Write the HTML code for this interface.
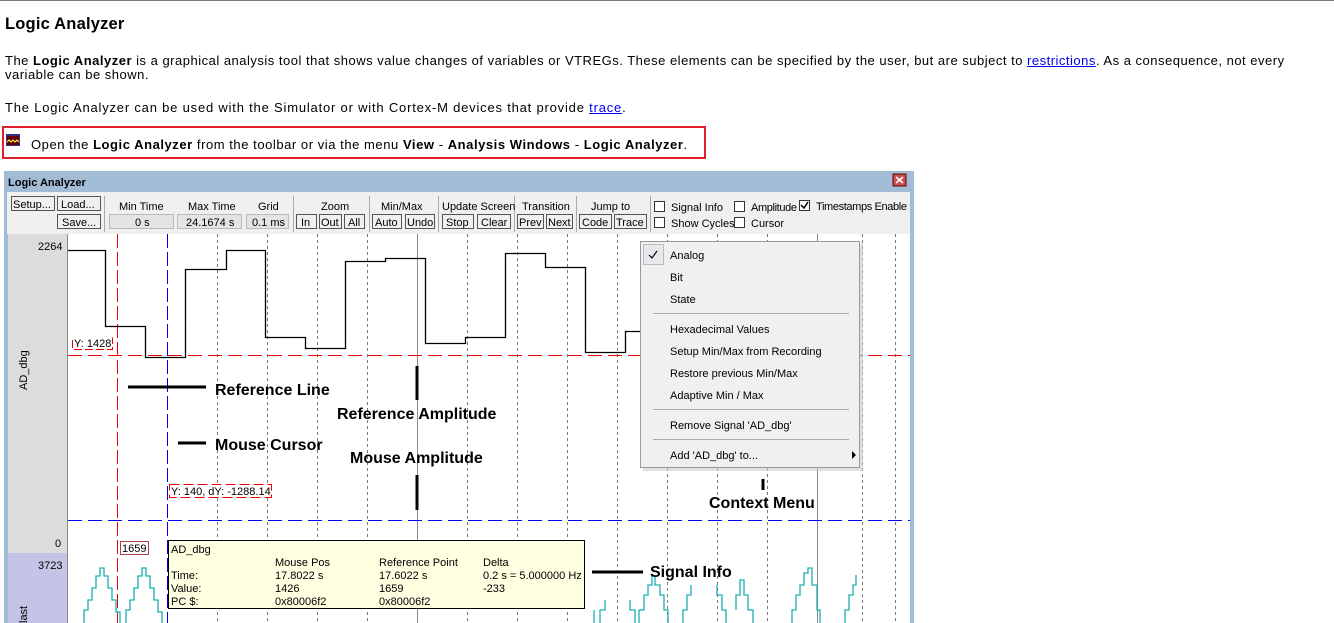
<!DOCTYPE html>
<html><head><meta charset="utf-8"><style>
*{margin:0;padding:0;box-sizing:border-box}
body{width:1334px;height:623px;overflow:hidden;background:#fff;font-family:"Liberation Sans",sans-serif;color:#000;position:relative}
.a{position:absolute;white-space:nowrap}
p.a{font-size:13px}
a{color:#00e;text-decoration:underline}
</style></head><body>
<div class="a" style="left:0;top:0;width:1334px;height:1px;background:#777"></div>
<div class="a" style="left:5px;top:15px;font-size:16.5px;font-weight:bold;letter-spacing:0.2px">Logic Analyzer</div>
<p class="a" style="left:5px;top:53px;letter-spacing:0.5px">The <b>Logic Analyzer</b> is a graphical analysis tool that shows value changes of variables or VTREGs. These elements can be specified by the user, but are subject to <a>restrictions</a>. As a consequence, not every</p>
<p class="a" style="left:5px;top:67px;letter-spacing:0.5px">variable can be shown.</p>
<p class="a" style="left:5px;top:100px;letter-spacing:0.8px">The Logic Analyzer can be used with the Simulator or with Cortex-M devices that provide <a>trace</a>.</p>
<div class="a" style="left:2px;top:126px;width:704px;height:33px;border:2px solid #e0202a"></div>
<svg class="a" style="left:6px;top:134px" width="14" height="12"><rect x="0" y="0" width="14" height="12" fill="#33338a"/><rect x="1" y="2" width="12" height="9" fill="#600"/><path d="M1 8 L3 6 L5 8 L7 6 L9 8 L11 6 L13 8" stroke="#ff3" fill="none"/></svg>
<p class="a" style="left:31px;top:137px;letter-spacing:0.55px">Open the <b>Logic Analyzer</b> from the toolbar or via the menu <b>View</b> - <b>Analysis Windows</b> - <b>Logic Analyzer</b>.</p>

<svg class="a" style="left:0;top:170px" width="916" height="453" font-family="Liberation Sans,sans-serif" font-size="11">
<rect x="4" y="1" width="910" height="452" fill="#a3bcd6"/>
<text x="8" y="16" font-weight="bold" font-size="11">Logic Analyzer</text>
<rect x="893" y="4" width="13" height="12" fill="#c85050" stroke="#600"/>
<path d="M896 7 L903 13 M903 7 L896 13" stroke="#fff" stroke-width="1.5"/>
<rect x="7" y="22" width="903" height="42" fill="#f0f0f0"/>
<rect x="8" y="64" width="902" height="389" fill="#fff"/>
<rect x="8" y="64" width="59" height="319" fill="#dcdcdc"/>
<rect x="8" y="383" width="59" height="70" fill="#c4c4e6"/>
<line x1="67.5" y1="64" x2="67.5" y2="453" stroke="#888"/>
<g fill="#f0f0f0" stroke="#555">
<rect x="11.5" y="26.5" width="43" height="14"/><rect x="57.5" y="26.5" width="43" height="14"/><rect x="57.5" y="44.5" width="43" height="14"/>
<rect x="296.5" y="44.5" width="20" height="14"/><rect x="319.5" y="44.5" width="22" height="14"/><rect x="344.5" y="44.5" width="20" height="14"/>
<rect x="372.5" y="44.5" width="29" height="14"/><rect x="405.5" y="44.5" width="29" height="14"/>
<rect x="442.5" y="44.5" width="31" height="14"/><rect x="477.5" y="44.5" width="33" height="14"/>
<rect x="517.5" y="44.5" width="26" height="14"/><rect x="546.5" y="44.5" width="26" height="14"/>
<rect x="579.5" y="44.5" width="32" height="14"/><rect x="614.5" y="44.5" width="32" height="14"/>
</g>
<g fill="#e4e4e4" stroke="#bbb"><rect x="109.5" y="44.5" width="64" height="14"/><rect x="177.5" y="44.5" width="64" height="14"/><rect x="246.5" y="44.5" width="42" height="14"/></g>
<g stroke="#aaa"><line x1="104.5" y1="26" x2="104.5" y2="62"/><line x1="293.5" y1="26" x2="293.5" y2="62"/><line x1="369.5" y1="26" x2="369.5" y2="62"/><line x1="438.5" y1="26" x2="438.5" y2="62"/><line x1="514.5" y1="26" x2="514.5" y2="62"/><line x1="576.5" y1="26" x2="576.5" y2="62"/><line x1="650.5" y1="26" x2="650.5" y2="62"/></g>
<g font-size="11">
<text x="13" y="38">Setup...</text><text x="61" y="38">Load...</text><text x="62" y="56">Save...</text>
<text x="119" y="40">Min Time</text><text x="188" y="40">Max Time</text><text x="258" y="40">Grid</text>
<text x="135" y="56">0 s</text><text x="186" y="56">24.1674 s</text><text x="252" y="56">0.1 ms</text>
<text x="321" y="40">Zoom</text><text x="301" y="56">In</text><text x="321" y="56">Out</text><text x="348" y="56">All</text>
<text x="381" y="40">Min/Max</text><text x="375" y="56">Auto</text><text x="407" y="56">Undo</text>
<text x="442" y="40">Update Screen</text><text x="446" y="56">Stop</text><text x="481" y="56">Clear</text>
<text x="522" y="40">Transition</text><text x="519" y="56">Prev</text><text x="548" y="56">Next</text>
<text x="591" y="40">Jump to</text><text x="582" y="56">Code</text><text x="616" y="56">Trace</text>
<text x="671" y="41">Signal Info</text><text x="751" y="41" textLength="46">Amplitude</text><text x="816" y="40" textLength="91">Timestamps Enable</text>
<text x="671" y="57">Show Cycles</text><text x="751" y="57">Cursor</text>
</g>
<g fill="#fff" stroke="#333"><rect x="654.5" y="31.5" width="10" height="10"/><rect x="734.5" y="31.5" width="10" height="10"/><rect x="799.5" y="30.5" width="10" height="10"/><rect x="654.5" y="47.5" width="10" height="10"/><rect x="734.5" y="47.5" width="10" height="10"/></g>
<path d="M801 35 L804 38 L808 32" stroke="#000" stroke-width="1.5" fill="none"/>
<text x="38" y="80">2264</text><text x="55" y="377">0</text><text x="38" y="399">3723</text>
<text transform="translate(27,220) rotate(-90)">AD_dbg</text>
<text transform="translate(27,453) rotate(-90)">last</text>
<g stroke="#777" stroke-dasharray="3,3">
<line x1="217.5" y1="64" x2="217.5" y2="453"/><line x1="267.5" y1="64" x2="267.5" y2="453"/><line x1="317.5" y1="64" x2="317.5" y2="453"/><line x1="367.5" y1="64" x2="367.5" y2="453"/><line x1="467.5" y1="64" x2="467.5" y2="453"/><line x1="517.5" y1="64" x2="517.5" y2="453"/><line x1="567.5" y1="64" x2="567.5" y2="453"/><line x1="617.5" y1="64" x2="617.5" y2="453"/><line x1="667.5" y1="64" x2="667.5" y2="453"/><line x1="717.5" y1="64" x2="717.5" y2="453"/><line x1="767.5" y1="64" x2="767.5" y2="453"/><line x1="862.5" y1="64" x2="862.5" y2="453"/><line x1="895.5" y1="64" x2="895.5" y2="453"/>
</g>
<g stroke="#888"><line x1="417.5" y1="64" x2="417.5" y2="453"/><line x1="817.5" y1="64" x2="817.5" y2="453"/></g>
<line x1="117.5" y1="64" x2="117.5" y2="453" stroke="#e00" stroke-dasharray="14,4"/>
<line x1="167.5" y1="64" x2="167.5" y2="453" stroke="#00e" stroke-dasharray="14,4"/>
<line x1="68" y1="185.5" x2="910" y2="185.5" stroke="#e00" stroke-dasharray="14,6"/>
<line x1="68" y1="350.5" x2="910" y2="350.5" stroke="#00e" stroke-dasharray="14,6"/>
<path d="M68 80.5 H105.5 V156.5 H145.5 V187.5 H185.5 V99.5 H226.5 V80.5 H265.5 V167.5 H305.5 V178.5 H345.5 V91.5 H385.5 V88.5 H425.5 V173.5 H465.5 V167.5 H505.5 V83.5 H545.5 V97.5 H585.5 V182.5 H625.5 V161.5 H645" stroke="#000" fill="none" stroke-width="1.3"/>
<path d="M84 453 V440 H88 V430 H92 V418 H96 V406 H100 V398 H104 V406 H108 V418 H112 V430 H116 V442 H120 V453 M126 453 V440 H130 V430 H134 V418 H138 V406 H142 V398 H146 V406 H150 V418 H154 V430 H158 V442 H162 V453 M594 440 V453 M600 453 V440 H605 V430 M630 430 V440 H635 V453 M639 453 V440 H644 V425 H648 V415 H652 V406 H655 V415 H660 V425 H664 V440 H668 V453 M683 453 V440 H687 V425 H691 V415 M717 415 V425 H722 V440 H726 V453 M736 440 V425 H740 V410 H744 V425 H748 V440 H753 V453 M792 453 V440 H796 V425 H800 V415 H804 V403 H808 V398 H812 V415 H817 V440 H820 V453 M845 453 V440 H849 V425 H853 V415 H856 V405" stroke="#1aafb4" fill="none" stroke-width="1.3"/>
<rect x="72.5" y="167.5" width="40" height="12" fill="#fff"/>
<text x="74" y="177">Y: 1428</text>
<path d="M72.5 170 V179.5 H112.5 V167.5" stroke="#e00" fill="none" stroke-dasharray="8,3"/>
<rect x="169.5" y="314.5" width="102" height="13" fill="#fff" stroke="#e00" stroke-dasharray="10,4"/>
<text x="171" y="325">Y: 140, dY: -1288.14</text>
<rect x="120.5" y="371.5" width="28" height="13" fill="#fff" stroke="#a44"/>
<text x="122" y="382">1659</text>
<rect x="168.5" y="370.5" width="416" height="68" fill="#ffffe1" stroke="#000"/>
<g font-size="11"><text x="171" y="383">AD_dbg</text>
<text x="275" y="396">Mouse Pos</text><text x="379" y="396">Reference Point</text><text x="483" y="396">Delta</text>
<text x="171" y="409">Time:</text><text x="275" y="409">17.8022 s</text><text x="379" y="409">17.6022 s</text><text x="483" y="409">0.2 s = 5.000000 Hz</text>
<text x="171" y="422">Value:</text><text x="275" y="422">1426</text><text x="379" y="422">1659</text><text x="483" y="422">-233</text>
<text x="171" y="435">PC $:</text><text x="275" y="435">0x80006f2</text><text x="379" y="435">0x80006f2</text></g>
<rect x="643" y="73" width="220" height="228" fill="#ccc" opacity=".6"/>
<rect x="640.5" y="71.5" width="219" height="226" fill="#f0f0f0" stroke="#999"/>
<rect x="643.5" y="74.5" width="20" height="20" fill="#e8e8ec" stroke="#bbb"/>
<path d="M649 85 L652 88 L657 81" stroke="#000" fill="none" stroke-width="1.2"/>
<g font-size="11"><text x="670" y="89">Analog</text><text x="670" y="111">Bit</text><text x="670" y="133">State</text>
<text x="670" y="163">Hexadecimal Values</text><text x="670" y="185">Setup Min/Max from Recording</text><text x="670" y="207">Restore previous Min/Max</text><text x="670" y="229">Adaptive Min / Max</text>
<text x="670" y="259">Remove Signal 'AD_dbg'</text><text x="670" y="289">Add 'AD_dbg' to...</text></g>
<g stroke="#aaa"><line x1="653" y1="143.5" x2="849" y2="143.5"/><line x1="653" y1="239.5" x2="849" y2="239.5"/><line x1="653" y1="269.5" x2="849" y2="269.5"/></g>
<path d="M852 281 L856 285 L852 289Z" fill="#000"/>
<g stroke="#000" stroke-width="3"><line x1="128" y1="217" x2="206" y2="217"/><line x1="178" y1="273" x2="206" y2="273"/><line x1="417" y1="196" x2="417" y2="230"/><line x1="417" y1="305" x2="417" y2="340"/><line x1="763" y1="309" x2="763" y2="320"/><line x1="592" y1="402" x2="643" y2="402"/></g>
<g font-weight="bold" font-size="16"><text x="215" y="225">Reference Line</text><text x="215" y="280">Mouse Cursor</text><text x="337" y="249">Reference Amplitude</text><text x="350" y="293">Mouse Amplitude</text><text x="709" y="338">Context Menu</text><text x="650" y="407">Signal Info</text></g>
</svg>
</body></html>
